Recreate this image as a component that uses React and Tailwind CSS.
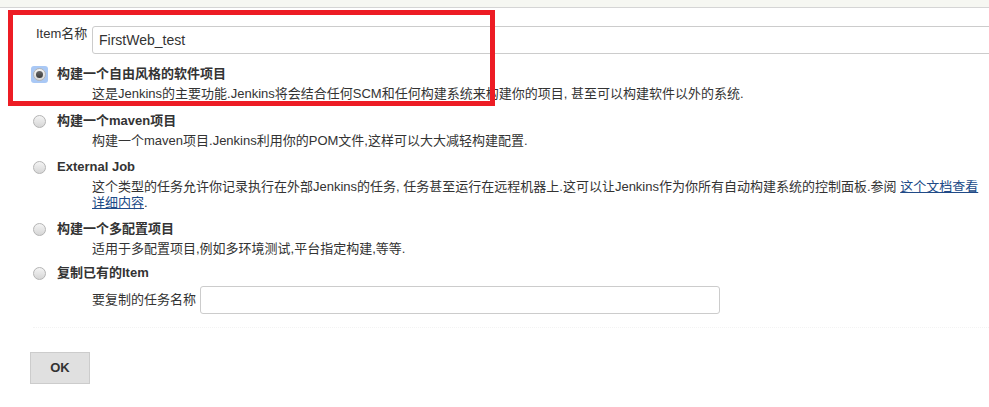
import React from "react";

const font = { fontFamily: '"Liberation Sans", "Noto Sans CJK SC", sans-serif' };

const Radio = ({ checked }) => (
  <span
    className={`flex h-[17px] w-[17px] items-center justify-center rounded-[3px] ${
      checked ? "bg-[#a9c8f5]" : ""
    }`}
  >
    <span className="flex h-[13px] w-[13px] items-center justify-center rounded-full border border-[#b4b4b4] bg-gradient-to-b from-[#f4f4f4] to-[#d6d6d6]">
      {checked && (
        <span className="h-[7px] w-[7px] rounded-full bg-gradient-to-b from-[#6a6a6a] to-[#3a3a3a]" />
      )}
    </span>
  </span>
);

const Option = ({ checked, title, children, className }) => (
  <div className={className}>
    <div className="flex h-[20px] items-center">
      <div className="ml-[31px] w-[26px]">
        <Radio checked={checked} />
      </div>
      <span className="text-[13px] font-bold text-[#333]">{title}</span>
    </div>
    {children && (
      <div className="mt-[2px] pl-[92px] pr-2 text-[13px] leading-[16px] text-[#333]">
        {children}
      </div>
    )}
  </div>
);

export default function App() {
  return (
    <div className="relative h-[407px] w-[989px] overflow-hidden bg-white" style={font}>
      <div className="h-[8px] border-b border-[#d5d5d5] bg-[#f6f7f2]" />

      <div className="mt-[18px] flex items-start">
        <label className="ml-[36px] mt-[1px] w-[56px] shrink-0 whitespace-nowrap text-[13px] leading-[14px] text-[#333]">
          Item名称
        </label>
        <input
          type="text"
          defaultValue="FirstWeb_test"
          className="h-[28px] w-[920px] shrink-0 rounded-[3px] border border-[#cccccc] px-[6px] text-[14px] text-[#333] outline-none"
        />
      </div>

      <Option className="mt-[10px]" checked title="构建一个自由风格的软件项目">
        这是Jenkins的主要功能.Jenkins将会结合任何SCM和任何构建系统来构建你的项目, 甚至可以构建软件以外的系统.
      </Option>

      <Option className="mt-[9px]" title="构建一个maven项目">
        构建一个maven项目.Jenkins利用你的POM文件,这样可以大大减轻构建配置.
      </Option>

      <Option className="mt-[8px]" title="External Job">
        这个类型的任务允许你记录执行在外部Jenkins的任务, 任务甚至运行在远程机器上.这可以让Jenkins作为你所有自动构建系统的控制面板.参阅{" "}
        <a href="#" className="text-[#204a87] underline">
          这个文档查看
          <br />
          详细内容
        </a>
        .
      </Option>

      <Option className="mt-[8px]" title="构建一个多配置项目">
        适用于多配置项目,例如多环境测试,平台指定构建,等等.
      </Option>

      <Option className="mt-[6px]" title="复制已有的Item" />

      <div className="ml-[33px] mt-[3px] flex items-center border-b border-dotted border-[#f3f3f3] pb-[13px] pl-[59px]">
        <span className="w-[108px] shrink-0 whitespace-nowrap text-[13px] text-[#333]">要复制的任务名称</span>
        <input
          type="text"
          className="h-[28px] w-[520px] rounded-[3px] border border-[#cccccc] px-[6px] text-[14px] outline-none"
        />
      </div>

      <div className="mt-[24px] pl-[30px]">
        <button className="h-[32px] w-[60px] border border-[#cccccc] bg-[#e0e0e0] text-[13px] font-bold text-[#333]">
          OK
        </button>
      </div>

      <div className="pointer-events-none absolute left-[8px] top-[10px] h-[96px] w-[487px] border-[5px] border-[#ed1c24]" />
    </div>
  );
}
